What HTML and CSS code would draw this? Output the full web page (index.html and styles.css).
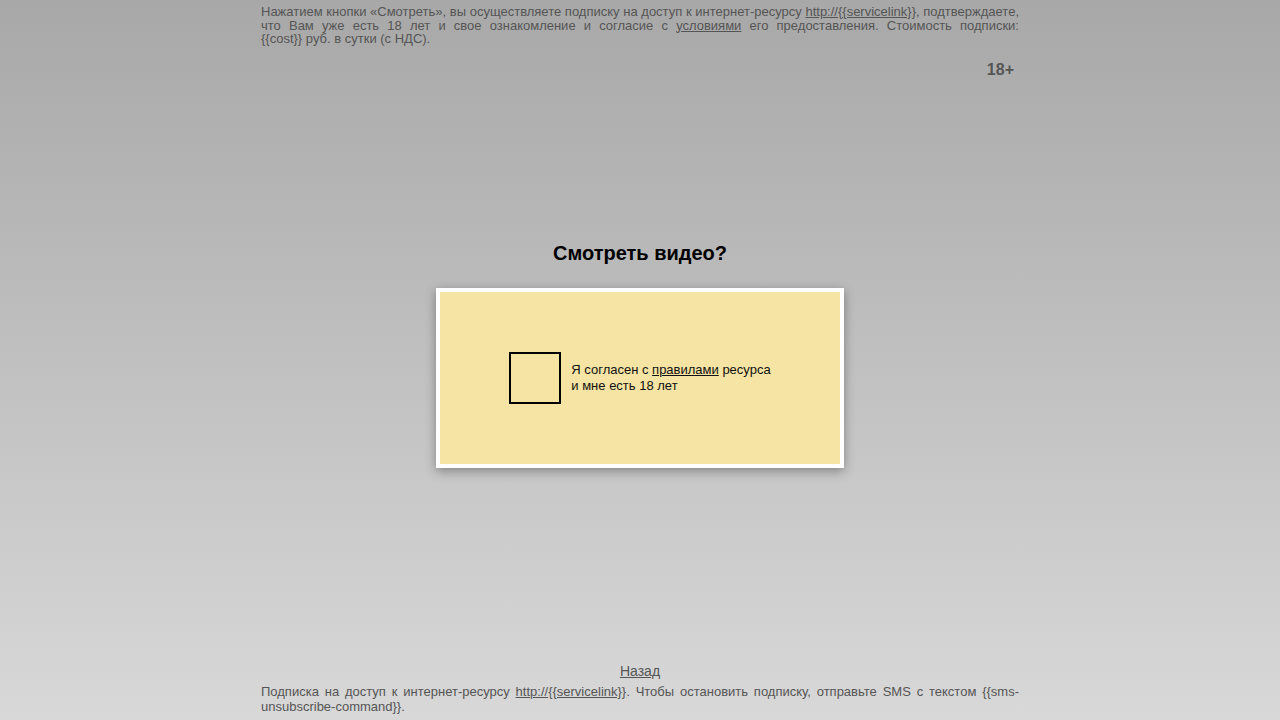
FILE: index.html
```html
<!DOCTYPE html>
<html lang="ru">
<head>
<meta charset="utf-8">
<title>Смотреть видео?</title>
<link rel="stylesheet" href="styles.css">
</head>
<body>
<div class="page">
  <p class="offer">Нажатием кнопки «Смотреть», вы осуществляете подписку на доступ к интернет-ресурсу <a href="#">http://{{servicelink}}</a>, подтверждаете, что Вам уже есть 18 лет и свое ознакомление и согласие с <a href="#">условиями</a> его предоставления. Стоимость подписки: {{cost}}&nbsp;руб. в сутки (с НДС).</p>
  <div class="age">18+</div>
  <main class="center">
    <h1 class="title">Смотреть видео?</h1>
    <div class="card">
      <label class="agree">
        <span class="box"></span>
        <span class="agree-text">Я согласен с <a href="#">правилами</a> ресурса<br>и мне есть 18 лет</span>
      </label>
    </div>
  </main>
  <footer class="foot">
    <a class="back" href="#">Назад</a>
    <p class="unsub">Подписка на доступ к интернет-ресурсу <a href="#">http://{{servicelink}}</a>. Чтобы остановить подписку, отправьте SMS с текстом {{sms-unsubscribe-command}}.</p>
  </footer>
</div>
</body>
</html>
```
FILE: styles.css
```css
html, body {
  margin: 0;
  padding: 0;
}
body {
  min-height: 720px;
  background: linear-gradient(to bottom, #a8a8a8 0%, #d8d8d8 100%);
  font-family: "Liberation Sans", Arial, sans-serif;
  color: #555;
}
.page {
  width: 758px;
  margin: 0 auto;
  height: 720px;
  display: flex;
  flex-direction: column;
}
.offer {
  margin: 5px 0 0;
  font-size: 13px;
  line-height: 13.5px;
  text-align: justify;
}
.offer a, .unsub a {
  color: #555;
}
.age {
  align-self: flex-end;
  margin: 15px 5px 0 0;
  font-size: 16px;
  font-weight: bold;
  line-height: 18px;
}
.center {
  display: flex;
  flex-direction: column;
  align-items: center;
  margin-top: 162px;
}
.title {
  margin: 0;
  font-size: 20px;
  line-height: 24px;
  font-weight: bold;
  color: #000;
}
.card {
  margin-top: 23px;
  width: 400px;
  height: 172px;
  border: 4px solid #fff;
  background: #f5e4a3;
  box-shadow: 0 3px 10px rgba(0, 0, 0, 0.35);
  display: flex;
  align-items: center;
  justify-content: center;
}
.agree {
  display: flex;
  align-items: center;
  gap: 10px;
}
.box {
  width: 48px;
  height: 48px;
  border: 2px solid #000;
  background: transparent;
  flex: none;
}
.agree-text {
  font-size: 13px;
  line-height: 16px;
  color: #111;
}
.agree-text a {
  color: #111;
}
.foot {
  margin-top: auto;
  display: flex;
  flex-direction: column;
  align-items: center;
}
.back {
  font-size: 14px;
  line-height: 16px;
  color: #555;
}
.unsub {
  margin: 5px 0 6px;
  font-size: 13px;
  line-height: 15px;
  text-align: justify;
  align-self: stretch;
}
```
